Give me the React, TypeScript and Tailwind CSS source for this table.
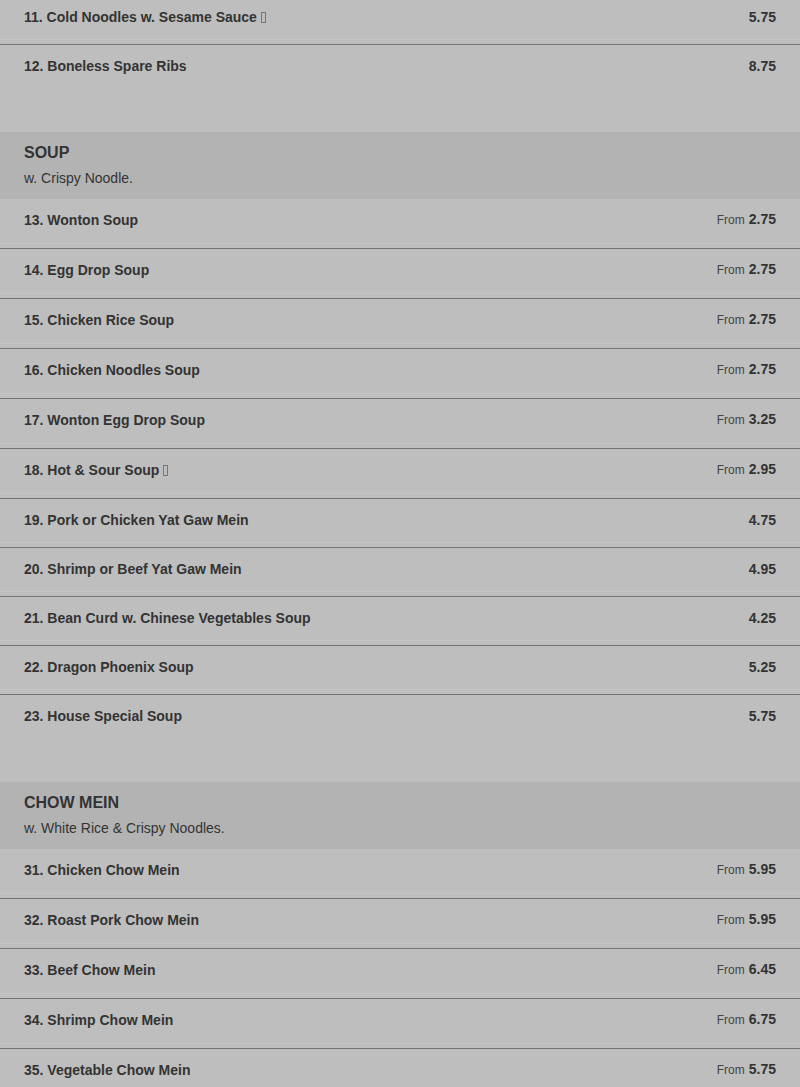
type Item = { name: string; price: string; from?: boolean; hot?: boolean };

type Section = { title: string; note: string; items: Item[] };

const lead: Item[] = [
  { name: "11. Cold Noodles w. Sesame Sauce", price: "5.75", hot: true },
  { name: "12. Boneless Spare Ribs", price: "8.75" },
];

const sections: Section[] = [
  {
    title: "SOUP",
    note: "w. Crispy Noodle.",
    items: [
      { name: "13. Wonton Soup", price: "2.75", from: true },
      { name: "14. Egg Drop Soup", price: "2.75", from: true },
      { name: "15. Chicken Rice Soup", price: "2.75", from: true },
      { name: "16. Chicken Noodles Soup", price: "2.75", from: true },
      { name: "17. Wonton Egg Drop Soup", price: "3.25", from: true },
      { name: "18. Hot & Sour Soup", price: "2.95", from: true, hot: true },
      { name: "19. Pork or Chicken Yat Gaw Mein", price: "4.75" },
      { name: "20. Shrimp or Beef Yat Gaw Mein", price: "4.95" },
      { name: "21. Bean Curd w. Chinese Vegetables Soup", price: "4.25" },
      { name: "22. Dragon Phoenix Soup", price: "5.25" },
      { name: "23. House Special Soup", price: "5.75" },
    ],
  },
  {
    title: "CHOW MEIN",
    note: "w. White Rice & Crispy Noodles.",
    items: [
      { name: "31. Chicken Chow Mein", price: "5.95", from: true },
      { name: "32. Roast Pork Chow Mein", price: "5.95", from: true },
      { name: "33. Beef Chow Mein", price: "6.45", from: true },
      { name: "34. Shrimp Chow Mein", price: "6.75", from: true },
      { name: "35. Vegetable Chow Mein", price: "5.75", from: true },
    ],
  },
];

function Row({ item, last }: { item: Item; last?: boolean }) {
  return (
    <div
      className={`flex flex-col ${item.from ? "h-[50px]" : "h-[49px]"} ${
        last ? "" : "border-b border-[#737373]"
      }`}
    >
      <div
        className={`flex items-center justify-between px-6 leading-5 ${
          item.from ? "pt-[10px]" : "pt-[11px]"
        }`}
      >
        <span className="text-[14px] font-bold text-[#333]">
          {item.name}
          {item.hot && (
            <span className="ml-[4px] inline-block h-[11px] w-[5px] border border-[#777] align-[-1px]" />
          )}
        </span>
        <span className="text-[14px] font-bold text-[#333]">
          {item.from && (
            <span className="mr-[4px] text-[12px] font-normal text-[#444]">From</span>
          )}
          {item.price}
        </span>
      </div>
      {!last && <div className="mt-auto mb-[4px] h-px bg-[#c6c6c6]" />}
    </div>
  );
}

export default function App() {
  return (
    <div
      className="min-h-screen overflow-hidden bg-[#bebebe]"
      style={{ fontFamily: '"Liberation Sans", Arial, sans-serif' }}
    >
      <div className="-mt-[4px]">
        {lead.map((it, i) => (
          <Row key={it.name} item={it} last={i === lead.length - 1} />
        ))}
      </div>

      {sections.map((s) => (
        <div key={s.title} className="mt-[38px]">
          <div className="h-[67px] bg-[#b3b3b3] px-6 pt-[11px] text-[#333]">
            <div className="text-[16px] font-bold leading-5">{s.title}</div>
            <div className="mt-[5px] text-[14px] leading-5">{s.note}</div>
          </div>
          {s.items.map((it, i) => (
            <Row
              key={it.name}
              item={it}
              last={s.title === "SOUP" && i === s.items.length - 1}
            />
          ))}
        </div>
      ))}
    </div>
  );
}
